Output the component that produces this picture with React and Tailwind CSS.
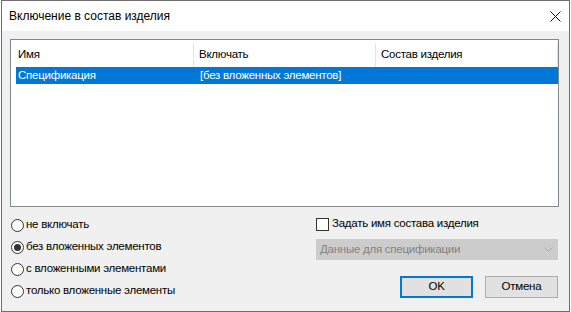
import React from 'react'

const font = { fontFamily: '"Segoe UI", "Liberation Sans", Arial, sans-serif' }

function Radio({ checked, label }) {
    return (
        <div className="flex items-center h-[22px]">
            <div className="w-[13px] h-[13px] rounded-full border border-[#333333] bg-white flex items-center justify-center">
                {checked && <div className="w-[7px] h-[7px] rounded-full bg-[#333333]" />}
            </div>
            <span className="ml-[2px] text-[11.5px] tracking-[-0.25px] text-black">{label}</span>
        </div>
    )
}

export default function App() {
    return (
        <div className="w-[571px] h-[312px] bg-white px-px" style={font}>
            <div className="w-full h-full border border-[#6f6f6f] bg-[#f0f0f0] flex flex-col text-[11.5px] tracking-[-0.25px]">
                {/* Title bar */}
                <div className="h-[30px] bg-white flex items-center justify-between shrink-0">
                    <span className="ml-[7px] text-[12px] tracking-normal text-black">Включение в состав изделия</span>
                    <svg width="11" height="11" viewBox="0 0 11 11" className="mr-[8px]">
                        <path d="M0.5 0.5 L10.5 10.5 M10.5 0.5 L0.5 10.5" stroke="#111" strokeWidth="1" />
                    </svg>
                </div>

                {/* List */}
                <div className="ml-[8px] mt-[8px] w-[549px] h-[168px] border border-[#828790] bg-white pl-[5px] pt-[3px] pr-0 shrink-0">
                    <div className="flex h-[24px] text-black">
                        <div className="w-[178px] border-r border-[#e5e5e5] pl-[2px] flex items-center">Имя</div>
                        <div className="w-[182px] border-r border-[#e5e5e5] pl-[5px] flex items-center">Включать</div>
                        <div className="flex-1 border-r border-[#e5e5e5] pl-[5px] flex items-center">Состав изделия</div>
                    </div>
                    <div className="flex h-[17px] bg-[#0078d7] text-white items-center">
                        <div className="w-[178px] pl-[2px]">Спецификация</div>
                        <div className="w-[182px] pl-[6px]">[без вложенных элементов]</div>
                        <div className="flex-1" />
                    </div>
                </div>

                {/* Options */}
                <div className="flex ml-[9px] mt-[7px]">
                    <div className="w-[305px]">
                        <Radio label="не включать" />
                        <Radio checked label="без вложенных элементов" />
                        <Radio label="с вложенными элементами" />
                        <Radio label="только вложенные элементы" />
                    </div>
                    <div className="w-[242px] flex flex-col">
                        <div className="flex items-center h-[20px]">
                            <div className="w-[13px] h-[13px] border border-[#333333] bg-white" />
                            <span className="ml-[3px] text-black">Задать имя состава изделия</span>
                        </div>
                        <div className="mt-[5px] h-[21px] bg-[#cccccc] flex items-center justify-between pl-[4px] pr-[5px]">
                            <span className="text-[#838383]">Данные для спецификации</span>
                            <svg width="9" height="5" viewBox="0 0 9 5">
                                <path d="M0.5 0.5 L4.5 4.5 L8.5 0.5" stroke="#a8a8a8" fill="none" strokeWidth="1" />
                            </svg>
                        </div>
                        <div className="mt-[16px] flex justify-end gap-[12px]">
                            <button className="w-[73px] h-[22px] border-2 border-[#0078d7] bg-[#e1e1e1] text-black">OK</button>
                            <button className="w-[73px] h-[22px] border border-[#adadad] bg-[#e1e1e1] text-black">Отмена</button>
                        </div>
                    </div>
                </div>
            </div>
        </div>
    )
}
